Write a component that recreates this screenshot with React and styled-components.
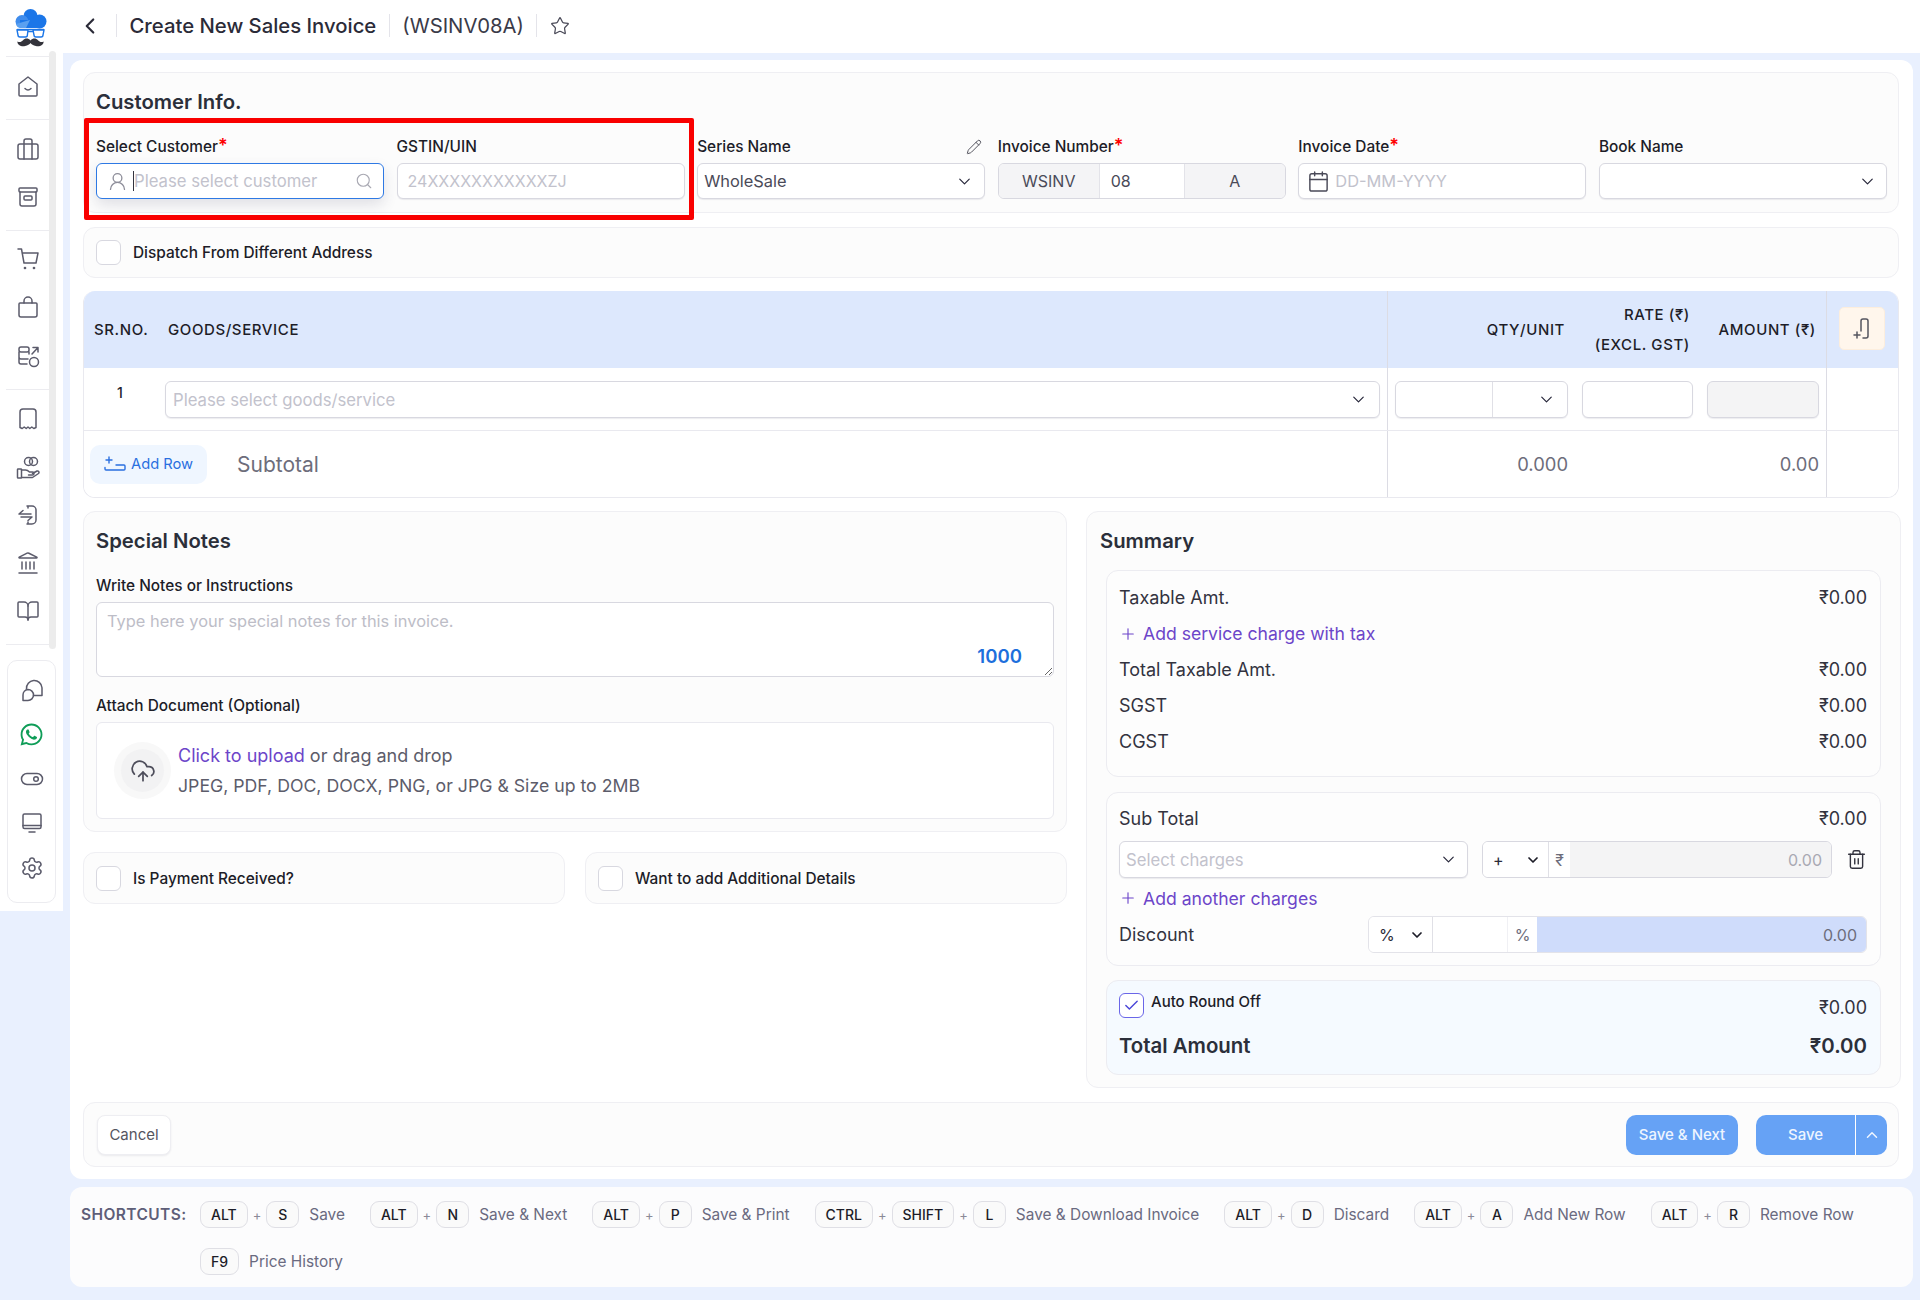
import styled, { createGlobalStyle } from "styled-components";
import {
  BookOpen,
  Calendar,
  Check,
  ChevronDown,
  ChevronLeft,
  ChevronUp,
  CloudUpload,
  Landmark,
  Pencil,
  Plus,
  Search,
  Settings,
  Star,
  Trash2,
  UserRound,
} from "lucide-react";
import { FaWhatsapp } from "react-icons/fa";

const GlobalStyle = createGlobalStyle`
  * { box-sizing: border-box; }
  html, body { margin: 0; padding: 0; }
  body {
    background: #e9f0fe;
    font-family: Inter, "Noto Sans", "Liberation Sans", sans-serif;
    color: #23232f;
  }
  input, textarea, button, select { font-family: inherit; }
`;

const Page = styled.div`
  position: relative;
  display: flex;
  width: 1920px;
  height: 1300px;
  overflow: hidden;
  background: #e9f0fe;
`;

/* sidebar */
const Sidebar = styled.aside`
  position: relative;
  width: 63px;
  height: 911px;
  flex-shrink: 0;
  background: #fff;
`;
const LogoWrap = styled.div`
  height: 57px;
  margin: 0 14px 0 6px;
  padding: 9px 0 0 8px;
  border-bottom: 1px solid #ececf0;
`;
const NavGroup = styled.div`
  margin: 0 14px 0 6px;
  padding: 6px 0 8px;
  border-bottom: 1px solid #ececf0;
`;
const NavItem = styled.div`
  height: 48px;
  padding-bottom: 3px;
  display: flex;
  align-items: center;
  justify-content: center;
  color: #5b5b6b;
`;
const ScrollThumb = styled.div`
  position: absolute;
  left: 49px;
  top: 51px;
  width: 7px;
  height: 598px;
  border-radius: 4px;
  background: #ececec;
`;
const ToolBox = styled.div`
  width: 49px;
  height: 243px;
  margin: 15px 0 0 7px;
  padding-top: 8px;
  border: 1px solid #ececf0;
  border-radius: 10px;
`;
const ToolItem = styled.div`
  height: 44.5px;
  padding-bottom: 3px;
  display: flex;
  align-items: center;
  justify-content: center;
  color: ${(p) => p.$color || "#5b5b6b"};
`;

const Glyph = ({ children, size = 24 }) => (
  <svg width={size} height={size} viewBox="0 0 24 24" fill="none" stroke="currentColor" strokeWidth="1.5" strokeLinecap="round" strokeLinejoin="round">
    {children}
  </svg>
);

const Logo = () => (
  <svg width="33" height="39" viewBox="0 0 33 39">
    <circle cx="16.5" cy="7" r="7" fill="#1b76e8" />
    <circle cx="8" cy="12.5" r="6.5" fill="#3f8cec" />
    <circle cx="25.5" cy="12.5" r="7" fill="#1b76e8" />
    <rect x="6" y="11" width="21" height="8" fill="#1b76e8" />
    <path d="M2 15l14-4-4 8H7a5 5 0 0 1-5-4z" fill="#5aa0f0" />
    <path d="M3 20.5h27" stroke="#1b76e8" strokeWidth="1.4" />
    <path d="M3 21h11l-.6 5a2 2 0 0 1-2 2H6a2 2 0 0 1-2-2zM19 21h11l-1 5a2 2 0 0 1-2 2h-5a2 2 0 0 1-2-2zM14 22.5h5" fill="#fff" stroke="#1b76e8" strokeWidth="1.4" />
    <path d="M16.5 31.5c-2.6-2.8-5.600-2.200-7.500-.2-1.800 1.900-3.600 2.200-5.600 1.100-.2 3.300 3.800 5.600 7.700 4.600 2.700-.7 4.400-1.800 5.400-3 1 1.200 2.700 2.300 5.400 3 3.900 1 7.900-1.300 7.700-4.600-2 1.100-3.800.8-5.600-1.100-1.900-2-4.900-2.600-7.500.2z" fill="#33333b" />
  </svg>
);

/* header */
const Content = styled.div`
  flex: 1;
  min-width: 0;
  display: flex;
  flex-direction: column;
`;
const TopBar = styled.header`
  height: 53px;
  display: flex;
  align-items: center;
  padding: 0 0 2px 14px;
  background: #fff;
  color: #2b2b38;
  font-size: 20.3px;
  font-weight: 500;
`;
const BackBtn = styled.div`
  width: 39px;
  height: 24px;
  display: flex;
  align-items: center;
  color: #2b2b38;
`;
const TitlePart = styled.div`
  display: flex;
  align-items: center;
  height: 23px;
  padding: 0 ${(p) => p.$right || 12.5}px 0 12.5px;
  border-left: 1px solid #e4e4ea;
  font-weight: ${(p) => p.$weight || 500};
  color: ${(p) => p.$color || "#2b2b38"};
`;

const Workspace = styled.div`
  padding: 7px 7px 0;
`;
const MainCard = styled.main`
  height: 1119px;
  padding: 12px 14px 13px 13px;
  border-radius: 12px;
  background: #fff;
`;
const Section = styled.section`
  border: 1px solid #efeff3;
  border-radius: 12px;
  background: #fcfcfc;
`;
const CustomerSection = styled(Section)`
  height: 141px;
  padding: 17px 11px 0 12px;
`;
const SectionTitle = styled.h2`
  margin: 0;
  height: 24px;
  font-size: 20.3px;
  line-height: 24px;
  font-weight: 600;
  color: #2b2f3a;
`;
const FieldGrid = styled.div`
  display: grid;
  grid-template-columns: repeat(6, 1fr);
  gap: 12.5px;
  margin-top: 24px;
`;
const Label = styled.label`
  display: flex;
  align-items: center;
  justify-content: space-between;
  height: 18px;
  margin-bottom: 7px;
  font-size: 15.4px;
  font-weight: 500;
  line-height: 18px;
  color: #1d1d28;
  white-space: nowrap;
`;
const Req = styled.span`
  color: #f00;
  font-size: 18px;
  line-height: 0;
  font-weight: 600;
`;
const PencilWrap = styled.span`
  display: flex;
  margin-right: 3px;
  color: #55555f;
`;
const InputBox = styled.div`
  position: relative;
  display: flex;
  align-items: center;
  height: ${(p) => p.$h || 36}px;
  padding: 0 ${(p) => p.$pad ?? 8}px;
  border: 1px solid ${(p) => (p.$focus ? "#2e79e4" : "#d8d8e0")};
  border-radius: 6px;
  background: ${(p) => p.$bg || "#fff"};
  box-shadow: ${(p) => (p.$focus ? "0 6px 14px rgba(60,60,90,.14)" : "0 1px 1px rgba(30,30,60,.08)")};
  font-size: 16px;
  color: #4a4a58;
`;
const Ghost = styled.span`
  flex: 1;
  min-width: 0;
  font-size: ${(p) => p.$size || 16.7}px;
  color: #c2c2cc;
  white-space: nowrap;
`;
const Value = styled.span`
  flex: 1;
  font-size: 16.4px;
  color: #4a4a58;
`;
const Caret = styled.span`
  width: 1px;
  height: 20px;
  background: #33333f;
`;
const IconSlot = styled.span`
  display: flex;
  flex-shrink: 0;
  margin: ${(p) => p.$m || "0"};
  color: ${(p) => p.$color || "#4a4a58"};
`;
const Segments = styled.div`
  display: grid;
  grid-template-columns: 100px 85px 1fr;
  height: 36px;
  border: 1px solid #d8d8e0;
  border-radius: 6px;
  overflow: hidden;
  font-size: 16px;
  color: #4a4a58;
`;
const Segment = styled.div`
  display: flex;
  align-items: center;
  justify-content: ${(p) => (p.$left ? "flex-start" : "center")};
  padding-left: ${(p) => (p.$left ? 11 : 0)}px;
  background: ${(p) => (p.$gray ? "#f4f4f6" : "#fff")};
  border-left: ${(p) => (p.$line ? "1px solid #e3e3e9" : "none")};
`;

/* red annotation */
const RedMark = styled.div`
  position: absolute;
  left: 83.5px;
  top: 118px;
  width: 610px;
  height: 102px;
  border: 5px solid #f90000;
  border-radius: 2px;
  pointer-events: none;
`;

const CheckRow = styled(Section)`
  display: flex;
  align-items: center;
  gap: 12px;
  height: ${(p) => p.$h || 51}px;
  margin-top: ${(p) => p.$mt || 0}px;
  padding-left: 12px;
  font-size: 15.4px;
  font-weight: 500;
  color: #1d1d28;
`;
const CheckBox = styled.span`
  width: 25px;
  height: 25px;
  flex-shrink: 0;
  border: 1px solid #d8d8e0;
  border-radius: 6px;
  background: #fff;
`;

/* goods table */
const Table = styled.div`
  margin-top: 13px;
  border: 1px solid #e9e9ef;
  border-top: none;
  border-radius: 12px;
  overflow: hidden;
  background: #fff;
`;
const TableRow = styled.div`
  display: grid;
  grid-template-columns: 1303px 439px 1fr;
  height: ${(p) => p.$h}px;
  background: ${(p) => p.$bg || "#fff"};
  border-bottom: ${(p) => (p.$line ? "1px solid #e9e9ef" : "none")};
`;
const LeftCell = styled.div`
  display: flex;
  align-items: center;
  min-width: 0;
`;
const DividedCell = styled.div`
  border-left: 1px solid #dcdce4;
`;
const ThText = styled.span`
  font-size: 15px;
  font-weight: 500;
  letter-spacing: 0.6px;
  color: #1d1d28;
  white-space: nowrap;
`;
const SrHead = styled(ThText)`
  width: 74px;
  margin-left: 10px;
`;
const HeadGrid = styled(DividedCell)`
  display: grid;
  grid-template-columns: 177px 125px 126px;
  align-items: center;
  text-align: right;
  font-size: 15px;
  line-height: 30px;
  font-weight: 500;
  letter-spacing: 0.6px;
  color: #1d1d28;
`;
const ColBtnCell = styled(DividedCell)`
  padding: 16px 0 0 12px;
`;
const ColBtn = styled.button`
  width: 46px;
  height: 43px;
  display: flex;
  align-items: center;
  justify-content: center;
  padding: 0;
  border: 1px solid #fdeedd;
  border-radius: 5px;
  background: #fff6ec;
  color: #55555f;
`;
const SrNo = styled.span`
  width: 81px;
  flex-shrink: 0;
  align-self: flex-start;
  margin-top: 16px;
  padding-right: 9px;
  text-align: center;
  font-size: 14px;
  font-weight: 500;
`;
const GoodsWrap = styled.div`
  flex: 1;
  margin: 1px 7px 0 0;
`;
const RowInputs = styled(DividedCell)`
  display: grid;
  grid-template-columns: 173px 111px 112px;
  gap: 14px;
  align-items: center;
  padding: 1px 0 0 7px;
`;
const QtyBox = styled(InputBox)`
  padding: 0;
`;
const QtyInput = styled.div`
  width: 97px;
  height: 100%;
  border-right: 1px solid #e0e0e6;
`;
const QtyArrow = styled.div`
  flex: 1;
  display: flex;
  justify-content: flex-end;
  padding-right: 11px;
`;
const AddRowBtn = styled.button`
  display: flex;
  align-items: center;
  gap: 5px;
  width: 117px;
  height: 39px;
  margin-left: 6px;
  padding: 0 0 0 14px;
  border: none;
  border-radius: 10px;
  background: #eff6ff;
  color: #2a6fe0;
  font-size: 14.7px;
`;
const SubtotalLabel = styled.span`
  margin-left: 30px;
  font-size: 21px;
  color: #6d6d7b;
`;
const TotalsGrid = styled(DividedCell)`
  display: grid;
  grid-template-columns: 180px 251px;
  align-items: center;
  text-align: right;
  font-size: 18.4px;
  color: #6d6d7b;
`;

/* notes + summary */
const Columns = styled.div`
  display: grid;
  grid-template-columns: 984px 1fr;
  gap: 19px;
  margin-top: 13px;
`;
const LeftCol = styled.div`
  display: flex;
  flex-direction: column;
  gap: 20px;
`;
const NotesSection = styled(Section)`
  height: 321px;
  padding: 17px 12px 0;
`;
const NotesLabel = styled(Label)`
  margin: ${(p) => p.$mt}px 0 ${(p) => p.$mb}px;
`;
const TextWrap = styled.div`
  position: relative;
  height: 75px;
`;
const NotesArea = styled.textarea`
  display: block;
  width: 100%;
  height: 75px;
  padding: 8px 10px;
  border: 1px solid #d8d8e0;
  border-radius: 6px;
  background: #fff;
  font-size: 16.4px;
  outline: none;
  &::placeholder { color: #bdbdc7; }
`;
const Counter = styled.span`
  position: absolute;
  right: 32px;
  bottom: 10px;
  font-size: 18.6px;
  font-weight: 600;
  color: #1d6fdc;
`;
const DropZone = styled.div`
  display: flex;
  align-items: center;
  gap: 7px;
  height: 97px;
  padding-left: 17px;
  border: 1px solid #e9e9ef;
  border-radius: 6px;
  background: #fff;
`;
const UploadHalo = styled.div`
  width: 57px;
  height: 57px;
  flex-shrink: 0;
  display: flex;
  align-items: center;
  justify-content: center;
  border-radius: 50%;
  background: #f8f8f8;
`;
const UploadCore = styled.div`
  width: 43px;
  height: 43px;
  display: flex;
  align-items: center;
  justify-content: center;
  border-radius: 50%;
  background: #f2f2f3;
  color: #4d4d5a;
`;
const DropText = styled.div`
  font-size: 18px;
  line-height: 30px;
  color: #5c5c6a;
`;
const DropHint = styled.span`
  font-size: 17.7px;
`;
const Purple = styled.span`
  color: #6c45c9;
`;
const CheckPair = styled.div`
  display: grid;
  grid-template-columns: 1fr 1fr;
  gap: 20px;
`;

const SummarySection = styled(Section)`
  height: 577px;
  padding: 17px 19px 0 19px;
`;
const SummaryTitle = styled(SectionTitle)`
  margin-left: -6px;
`;
const SumBox = styled.div`
  margin-top: ${(p) => p.$mt}px;
  padding: ${(p) => p.$py || "7.5px"} 13px ${(p) => p.$pb || 13}px 12px;
  height: ${(p) => p.$h}px;
  border: 1px solid #ececf1;
  border-radius: 12px;
  background: ${(p) => p.$bg || "#fdfdfd"};
`;
const SumRow = styled.div`
  display: flex;
  align-items: center;
  justify-content: space-between;
  height: ${(p) => p.$h || 36}px;
  font-size: ${(p) => p.$size || 18}px;
  font-weight: ${(p) => p.$weight || 400};
  color: ${(p) => p.$color || "#33333f"};
`;
const AddLink = styled.div`
  display: flex;
  align-items: center;
  gap: 6px;
  height: 36px;
  margin-top: ${(p) => p.$mt || 0}px;
  font-size: 17.6px;
  color: #6c45c9;
`;
const ChargeRow = styled.div`
  display: flex;
  align-items: center;
  margin-top: 4.5px;
`;
const ChargeSelect = styled(InputBox)`
  width: 349px;
  height: 37px;
`;
const MoneyGroup = styled.div`
  display: flex;
  width: 350px;
  height: 37px;
  margin-left: 14px;
  border: 1px solid #d8d8e0;
  border-radius: 6px;
  overflow: hidden;
  font-size: 16px;
`;
const MiniSelect = styled.div`
  display: flex;
  align-items: center;
  justify-content: space-between;
  width: ${(p) => p.$w}px;
  padding: 0 7px 0 10px;
  border-right: 1px solid #e0e0e6;
  background: #fff;
  color: #2b2b38;
`;
const Affix = styled.div`
  display: flex;
  align-items: center;
  justify-content: center;
  width: ${(p) => p.$w}px;
  background: #fff;
  color: #6d6d7b;
`;
const Filled = styled.div`
  flex: 1;
  display: flex;
  align-items: center;
  justify-content: flex-end;
  padding-right: ${(p) => p.$pr || 9}px;
  background: ${(p) => p.$bg};
  color: ${(p) => p.$color};
`;
const BlankCell = styled.div`
  width: 75px;
  background: #fff;
  border-right: 1px solid #f0f0f4;
`;
const TrashBtn = styled.div`
  display: flex;
  margin-left: 14px;
  color: #33333f;
`;
const DiscountRow = styled.div`
  display: flex;
  align-items: center;
  justify-content: space-between;
  height: 37px;
  font-size: 18px;
  color: #33333f;
`;
const DiscountGroup = styled(MoneyGroup)`
  width: 499px;
  margin: 0;
  border-color: #e3e3e9;
`;
const RoundRow = styled.div`
  display: flex;
  justify-content: space-between;
  height: 38px;
`;
const RoundLeft = styled.div`
  display: flex;
  gap: 7px;
  font-size: 15px;
  font-weight: 500;
  color: #1d1d28;
`;
const RoundCheck = styled.span`
  width: 25px;
  height: 25px;
  display: flex;
  align-items: center;
  justify-content: center;
  border: 1.5px solid #6a66e8;
  border-radius: 6px;
  background: #fff;
  color: #4a46d8;
`;
const RoundText = styled.span`
  line-height: 18px;
`;
const RoundValue = styled.span`
  margin-top: 4px;
  font-size: 18px;
  color: #33333f;
`;

/* footer */
const FooterBar = styled(Section)`
  display: flex;
  align-items: center;
  justify-content: space-between;
  height: 65px;
  margin-top: 14px;
  padding: 0 11px 0 13px;
`;
const CancelBtn = styled.button`
  width: 74px;
  height: 40px;
  padding: 0;
  border: 1px solid #eeeef2;
  border-radius: 8px;
  background: #fff;
  box-shadow: 0 1px 2px rgba(30, 30, 60, 0.08);
  font-size: 15px;
  color: #55555f;
`;
const SaveGroup = styled.div`
  display: flex;
  gap: 18px;
`;
const SaveBtn = styled.button`
  display: flex;
  align-items: center;
  justify-content: center;
  width: ${(p) => p.$w}px;
  height: 40px;
  padding: 0;
  border: none;
  border-radius: ${(p) => p.$radius || "10px"};
  border-left: ${(p) => (p.$split ? "1px solid #fff" : "none")};
  background: #66a2f5;
  color: #eef5ff;
  font-size: 15px;
  font-weight: 500;
`;
const SplitBtn = styled.div`
  display: flex;
`;

/* shortcuts */
const ShortcutBar = styled.div`
  display: flex;
  height: 100px;
  margin: 8px 0 0;
  padding: 14px 11px 0;
  border-radius: 12px;
  background: #fcfcfd;
`;
const ShortcutTitle = styled.span`
  width: 119px;
  flex-shrink: 0;
  line-height: 27px;
  font-size: 15.5px;
  font-weight: 600;
  letter-spacing: 0.4px;
  color: #5e5e78;
`;
const ShortcutList = styled.div`
  display: flex;
  flex-wrap: wrap;
  align-content: flex-start;
  gap: 20px 25px;
`;
const Shortcut = styled.div`
  display: flex;
  align-items: center;
  height: 27px;
`;
const Key = styled.kbd`
  display: flex;
  align-items: center;
  justify-content: center;
  min-width: 33px;
  height: 27px;
  padding: 0 10px;
  border: 1px solid #dfdfe5;
  border-radius: 9px;
  background: #fafafa;
  font-family: inherit;
  font-size: 14px;
  font-weight: 500;
  color: #1d1d28;
`;
const PlusMark = styled.span`
  margin: 0 5px;
  font-size: 13px;
  color: #8a8a98;
`;
const KeyName = styled.span`
  margin-left: 10px;
  font-size: 15.4px;
  font-weight: 400;
  color: #6a6a80;
  white-space: nowrap;
`;

const sidebarGroups = [
  [
    <Glyph><path d="M3 10l9-7 9 7v11a1 1 0 0 1-1 1H4a1 1 0 0 1-1-1z" /><path d="M9 14.500q3 3 6 0" /></Glyph>,
  ],
  [
    <Glyph><rect x="2" y="7" width="20" height="15" rx="2" /><path d="M8 7v15M16 7v15M8 7V4a2 2 0 0 1 2-2h4a2 2 0 0 1 2 2v3" /></Glyph>,
    <Glyph><rect x="3" y="3" width="18" height="4" rx="1" /><path d="M4 7v12a2 2 0 0 0 2 2h12a2 2 0 0 0 2-2V7" /><rect x="8" y="11" width="8" height="4" rx="1" /></Glyph>,
  ],
  [
    <Glyph><path d="M2 1h3.500L8 15h12l2-10H6" /><circle cx="9" cy="20" r=".6" /><circle cx="18" cy="20" r=".6" /></Glyph>,
    <Glyph><path d="M4 7h16a1 1 0 0 1 1 1v11a2 2 0 0 1-2 2H5a2 2 0 0 1-2-2V8a1 1 0 0 1 1-1z" /><path d="M8 7V5a4 4 0 0 1 8 0v2" /></Glyph>,
    <Glyph><path d="M3 5a2 2 0 0 1 2-2h6a2 2 0 0 1 2 2v1a2 2 0 0 1-2 2H5a2 2 0 0 1-2-2zM3 8v5a2 2 0 0 0 2 2h7M13 8v2M3 13v5a2 2 0 0 0 2 2h6" /><circle cx="18" cy="18" r="4.500" /><path d="M16 10l6-6.500M17 3.500h5V8" /></Glyph>,
  ],
  [
    <Glyph><path d="M4 5a3 3 0 0 1 3-3h10a3 3 0 0 1 3 3v15.500l-2.200 1-2-1.500-2 1.500-1.800-1.500-1.800 1.500-2-1.500-2 1.500-2.200-1z" /></Glyph>,
    <Glyph>
      <circle cx="12.500" cy="6.500" r="4" />
      <circle cx="17.500" cy="6.500" r="4" />
      <rect x="1.500" y="14" width="4" height="9" rx=".6" />
      <path d="M5.500 15h4c2 0 3 1 4 2h3a1.500 1.500 0 0 1 0 3h-4" />
      <path d="M16.500 18.500l4.500-2.500a1.500 1.500 0 0 1 1.500 2.500l-6 4h-11" />
    </Glyph>,
    <Glyph><path d="M11 3h5a4 4 0 0 1 4 4v10a4 4 0 0 1-4 4h-5M12 3v2M12 19v2" /><path d="M7 7.500L3 11h12M5 14h11l-4 3.500" /></Glyph>,
    <Landmark size={24} strokeWidth={1.5} />,
    <BookOpen size={24} strokeWidth={1.5} />,
  ],
];

const shortcuts = [
  { keys: ["ALT", "S"], name: "Save" },
  { keys: ["ALT", "N"], name: "Save & Next" },
  { keys: ["ALT", "P"], name: "Save & Print" },
  { keys: ["CTRL", "SHIFT", "L"], name: "Save & Download Invoice" },
  { keys: ["ALT", "D"], name: "Discard" },
  { keys: ["ALT", "A"], name: "Add New Row" },
  { keys: ["ALT", "R"], name: "Remove Row" },
  { keys: ["F9"], name: "Price History" },
];

const Arrow = ({ mr = 0 }) => (
  <IconSlot $color="#26263a" $m={`0 ${mr}px 0 0`}><ChevronDown size={19} strokeWidth={1.5} /></IconSlot>
);

const BoldArrow = () => (
  <IconSlot $color="#1d1d28"><ChevronDown size={16} strokeWidth={2.6} /></IconSlot>
);

export default function App() {
  return (
    <Page>
      <GlobalStyle />
      <Sidebar>
        <ScrollThumb />
        <LogoWrap><Logo /></LogoWrap>
        {sidebarGroups.map((group, i) => (
          <NavGroup key={i}>
            {group.map((icon, j) => <NavItem key={j}>{icon}</NavItem>)}
          </NavGroup>
        ))}
        <ToolBox>
          <ToolItem>
            <Glyph><path d="M6.500 11A7.700 7.700 0 0 1 22 9.700V17.500h-8.500" /><path d="M8 11.500a5.500 5.500 0 0 1 0 11H3V17a5.500 5.500 0 0 1 5-5.500z" /></Glyph>
          </ToolItem>
          <ToolItem $color="#0f9d58"><FaWhatsapp size={25} /></ToolItem>
          <ToolItem>
            <Glyph><rect x="1.500" y="6.500" width="21" height="11" rx="5.500" /><circle cx="16" cy="12" r="2.300" /></Glyph>
          </ToolItem>
          <ToolItem>
            <Glyph><rect x="3" y="3" width="18" height="14.500" rx="1.500" /><path d="M3 14.500h18M9 21h6" /></Glyph>
          </ToolItem>
          <ToolItem><Settings size={24} strokeWidth={1.5} /></ToolItem>
        </ToolBox>
      </Sidebar>

      <Content>
        <TopBar>
          <BackBtn><ChevronLeft size={26} strokeWidth={2} /></BackBtn>
          <TitlePart>Create New Sales Invoice</TitlePart>
          <TitlePart $color="#3a3a48" $weight={400}>(WSINV08A)</TitlePart>
          <TitlePart $right={0}><Star size={20} strokeWidth={1.5} color="#4a4a58" /></TitlePart>
        </TopBar>

        <Workspace>
          <MainCard>
            <CustomerSection>
              <SectionTitle>Customer Info.</SectionTitle>
              <FieldGrid>
                <div>
                  <Label><span>Select Customer<Req>*</Req></span></Label>
                  <InputBox $focus $pad={10}>
                    <IconSlot $color="#8d8d99" $m="0 5px 0 0"><UserRound size={21} strokeWidth={1.5} /></IconSlot>
                    <Caret />
                    <Ghost>Please select customer</Ghost>
                    <IconSlot $color="#a8a8b2"><Search size={18} strokeWidth={1.5} /></IconSlot>
                  </InputBox>
                </div>
                <div>
                  <Label>GSTIN/UIN</Label>
                  <InputBox $pad={10}><Ghost $size={16}>24XXXXXXXXXXXZJ</Ghost></InputBox>
                </div>
                <div>
                  <Label>
                    Series Name
                    <PencilWrap><Pencil size={16} strokeWidth={1.5} /></PencilWrap>
                  </Label>
                  <InputBox $pad={6}><Value>WholeSale</Value><Arrow mr={4} /></InputBox>
                </div>
                <div>
                  <Label><span>Invoice Number<Req>*</Req></span></Label>
                  <Segments>
                    <Segment $gray>WSINV</Segment>
                    <Segment $left $line>08</Segment>
                    <Segment $gray $line>A</Segment>
                  </Segments>
                </div>
                <div>
                  <Label><span>Invoice Date<Req>*</Req></span></Label>
                  <InputBox>
                    <IconSlot $m="0 5px 0 0"><Calendar size={23} strokeWidth={1.5} /></IconSlot>
                    <Ghost $size={16.4}>DD-MM-YYYY</Ghost>
                  </InputBox>
                </div>
                <div>
                  <Label>Book Name</Label>
                  <InputBox><Value /><Arrow mr={1} /></InputBox>
                </div>
              </FieldGrid>
            </CustomerSection>

            <CheckRow $mt={14}><CheckBox />Dispatch From Different Address</CheckRow>

            <Table>
              <TableRow $h={77} $bg="#dde8fd">
                <LeftCell>
                  <SrHead>SR.NO.</SrHead>
                  <ThText>GOODS/SERVICE</ThText>
                </LeftCell>
                <HeadGrid>
                  <span>QTY/UNIT</span>
                  <span>RATE (₹)<br />(EXCL. GST)</span>
                  <span>AMOUNT (₹)</span>
                </HeadGrid>
                <ColBtnCell>
                  <ColBtn>
                    <Glyph>
                      <path d="M11 14V4a2 2 0 0 1 2-2h3a2 2 0 0 1 2 2v15a2 2 0 0 1-2 2h-3" />
                      <path d="M7 15v6M4 18h6" />
                    </Glyph>
                  </ColBtn>
                </ColBtnCell>
              </TableRow>
              <TableRow $h={63} $line>
                <LeftCell>
                  <SrNo>1</SrNo>
                  <GoodsWrap>
                    <InputBox $h={37} $pad={7}>
                      <Ghost>Please select goods/service</Ghost>
                      <Arrow mr={4} />
                    </InputBox>
                  </GoodsWrap>
                </LeftCell>
                <RowInputs>
                  <QtyBox $h={37}>
                    <QtyInput />
                    <QtyArrow><Arrow /></QtyArrow>
                  </QtyBox>
                  <InputBox $h={37} />
                  <InputBox $h={37} $bg="#f4f4f5" />
                </RowInputs>
                <DividedCell />
              </TableRow>
              <TableRow $h={66}>
                <LeftCell>
                  <AddRowBtn>
                    <svg width="22" height="16" viewBox="0 0 22 16" fill="none" stroke="currentColor" strokeWidth="1.4" strokeLinecap="round">
                      <path d="M5 1v6M2 4h6" />
                      <path d="M1 11.500v1.500a1 1 0 0 0 1 1h18a1 1 0 0 0 1-1v-3a1 1 0 0 0-1-1h-8" />
                    </svg>
                    Add Row
                  </AddRowBtn>
                  <SubtotalLabel>Subtotal</SubtotalLabel>
                </LeftCell>
                <TotalsGrid>
                  <span>0.000</span>
                  <span>0.00</span>
                </TotalsGrid>
                <DividedCell />
              </TableRow>
            </Table>

            <Columns>
              <LeftCol>
                <NotesSection>
                  <SectionTitle>Special Notes</SectionTitle>
                  <NotesLabel $mt={24} $mb={7}>Write Notes or Instructions</NotesLabel>
                  <TextWrap>
                    <NotesArea placeholder="Type here your special notes for this invoice." />
                    <Counter>1000</Counter>
                  </TextWrap>
                  <NotesLabel $mt={20} $mb={7}>Attach Document (Optional)</NotesLabel>
                  <DropZone>
                    <UploadHalo>
                      <UploadCore><CloudUpload size={26} strokeWidth={1.6} /></UploadCore>
                    </UploadHalo>
                    <DropText>
                      <Purple>Click to upload</Purple> or drag and drop
                      <br />
                      <DropHint>JPEG, PDF, DOC, DOCX, PNG, or JPG &amp; Size up to 2MB</DropHint>
                    </DropText>
                  </DropZone>
                </NotesSection>
                <CheckPair>
                  <CheckRow $h={52}><CheckBox />Is Payment Received?</CheckRow>
                  <CheckRow $h={52}><CheckBox />Want to add Additional Details</CheckRow>
                </CheckPair>
              </LeftCol>

              <SummarySection>
                <SummaryTitle>Summary</SummaryTitle>
                <SumBox $mt={17} $h={207} $py="8.5px">
                  <SumRow><span>Taxable Amt.</span><span>₹0.00</span></SumRow>
                  <AddLink><Plus size={18} strokeWidth={1.5} />Add service charge with tax</AddLink>
                  <SumRow><span>Total Taxable Amt.</span><span>₹0.00</span></SumRow>
                  <SumRow><span>SGST</span><span>₹0.00</span></SumRow>
                  <SumRow><span>CGST</span><span>₹0.00</span></SumRow>
                </SumBox>
                <SumBox $mt={15} $h={174}>
                  <SumRow><span>Sub Total</span><span>₹0.00</span></SumRow>
                  <ChargeRow>
                    <ChargeSelect $pad={6}><Ghost>Select charges</Ghost><Arrow mr={3} /></ChargeSelect>
                    <MoneyGroup>
                      <MiniSelect $w={66}><span>+</span><BoldArrow /></MiniSelect>
                      <Affix $w={21}>₹</Affix>
                      <Filled $bg="#f4f4f5" $color="#a9a9b3">0.00</Filled>
                    </MoneyGroup>
                    <TrashBtn><Trash2 size={21} strokeWidth={1.6} /></TrashBtn>
                  </ChargeRow>
                  <AddLink $mt={2}><Plus size={18} strokeWidth={1.5} />Add another charges</AddLink>
                  <DiscountRow>
                    <span>Discount</span>
                    <DiscountGroup>
                      <MiniSelect $w={64}><span>%</span><BoldArrow /></MiniSelect>
                      <BlankCell />
                      <Affix $w={29}>%</Affix>
                      <Filled $bg="#cfdcfb" $pr={9} $color="#6d6d7b">0.00</Filled>
                    </DiscountGroup>
                  </DiscountRow>
                </SumBox>
                <SumBox $mt={14} $h={95} $py="12px" $pb={0} $bg="#f5faff">
                  <RoundRow>
                    <RoundLeft>
                      <RoundCheck><Check size={17} strokeWidth={2} /></RoundCheck>
                      <RoundText>Auto Round Off</RoundText>
                    </RoundLeft>
                    <RoundValue>₹0.00</RoundValue>
                  </RoundRow>
                  <SumRow $h={28} $size={20.4} $weight={600} $color="#2b2f3a">
                    <span>Total Amount</span><span>₹0.00</span>
                  </SumRow>
                </SumBox>
              </SummarySection>
            </Columns>

            <FooterBar>
              <CancelBtn>Cancel</CancelBtn>
              <SaveGroup>
                <SaveBtn $w={112}>Save &amp; Next</SaveBtn>
                <SplitBtn>
                  <SaveBtn $w={99} $radius="10px 0 0 10px">Save</SaveBtn>
                  <SaveBtn $w={32} $radius="0 10px 10px 0" $split><ChevronUp size={18} strokeWidth={2} /></SaveBtn>
                </SplitBtn>
              </SaveGroup>
            </FooterBar>
          </MainCard>

          <ShortcutBar>
            <ShortcutTitle>SHORTCUTS:</ShortcutTitle>
            <ShortcutList>
              {shortcuts.map((item) => (
                <Shortcut key={item.name}>
                  {item.keys.map((k, i) => (
                    <span key={k} style={{ display: "contents" }}>
                      {i > 0 && <PlusMark>+</PlusMark>}
                      <Key>{k}</Key>
                    </span>
                  ))}
                  <KeyName>{item.name}</KeyName>
                </Shortcut>
              ))}
            </ShortcutList>
          </ShortcutBar>
        </Workspace>
      </Content>

      <RedMark />
    </Page>
  );
}
